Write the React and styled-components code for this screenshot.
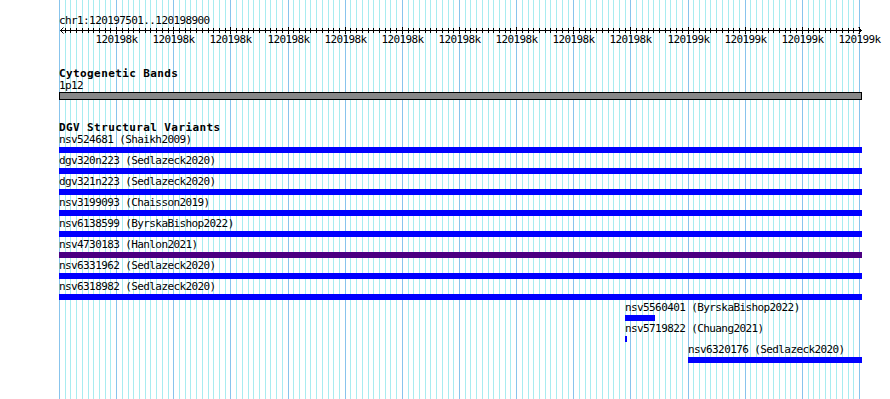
import React from 'react';
import styled, { createGlobalStyle } from 'styled-components';

const WIN_START = 120197500;
const WIN_END = 120198900;
const PX_PER_BP = 800 / 1400;
const TRACK_WIDTH = 803;

const toPx = (bp) => Math.round((bp - WIN_START) * PX_PER_BP);

const GlobalStyle = createGlobalStyle`
  html, body {
    margin: 0;
    padding: 0;
    background: #fff;
  }
  body {
    font-family: "DejaVu Sans Mono", "Liberation Mono", monospace;
    color: #000;
  }
`;

const Page = styled.div`
  width: 890px;
  height: 399px;
  overflow: hidden;
  display: flex;
`;

// data area, the guide lines sit behind everything in it
const Canvas = styled.div`
  position: relative;
  margin-left: 59px;
  width: ${TRACK_WIDTH}px;
  height: 100%;
`;

const Guides = styled.svg`
  position: absolute;
  top: 0;
  left: 0;
  z-index: 0;
`;

const Content = styled.div`
  position: relative;
  z-index: 1;
  display: flex;
  flex-direction: column;
`;

const Position = styled.div`
  margin-top: 15px;
  font-size: 11px;
  letter-spacing: -0.6px;
  line-height: 12px;
  white-space: nowrap;
`;

const Ruler = styled.svg`
  display: block;
  overflow: visible;
`;

const TickLabel = styled.text`
  font-family: "DejaVu Sans Mono", "Liberation Mono", monospace;
  font-size: 11px;
  letter-spacing: -0.6px;
  fill: #000;
`;

const TrackTitle = styled.div`
  margin-top: ${(p) => p.$gap}px;
  font-size: 11px;
  line-height: 12px;
  font-weight: bold;
  letter-spacing: 0.4px;
  white-space: nowrap;
`;

const ItemLabel = styled.div`
  font-size: 11px;
  letter-spacing: -0.6px;
  line-height: 12px;
  white-space: nowrap;
  margin-bottom: 1px;
`;

const BandLabel = styled(ItemLabel)`
  margin-bottom: 0;
`;

const Band = styled.div`
  height: 8px;
  box-sizing: border-box;
  border: 1px solid #000;
  background: #888;
`;

const Row = styled.div`
  display: flex;
  flex-direction: column;
  align-items: flex-start;
  margin-bottom: 2px;
`;

const Bar = styled.div`
  height: 6px;
  background: ${(p) => p.$color};
`;

const variants = [
  { name: 'nsv524681', study: 'Shaikh2009', start: 120190000, end: 120210000, color: '#0000ff' },
  { name: 'dgv320n223', study: 'Sedlazeck2020', start: 120190000, end: 120210000, color: '#0000ff' },
  { name: 'dgv321n223', study: 'Sedlazeck2020', start: 120190000, end: 120210000, color: '#0000ff' },
  { name: 'nsv3199093', study: 'Chaisson2019', start: 120190000, end: 120210000, color: '#0000ff' },
  { name: 'nsv6138599', study: 'ByrskaBishop2022', start: 120190000, end: 120210000, color: '#0000ff' },
  { name: 'nsv4730183', study: 'Hanlon2021', start: 120190000, end: 120210000, color: '#4b0082' },
  { name: 'nsv6331962', study: 'Sedlazeck2020', start: 120190000, end: 120210000, color: '#0000ff' },
  { name: 'nsv6318982', study: 'Sedlazeck2020', start: 120190000, end: 120210000, color: '#0000ff' },
  { name: 'nsv5560401', study: 'ByrskaBishop2022', start: 120198491, end: 120198543, color: '#0000ff' },
  { name: 'nsv5719822', study: 'Chuang2021', start: 120198491, end: 120198494, color: '#0000ff' },
  { name: 'nsv6320176', study: 'Sedlazeck2020', start: 120198601, end: 120199500, color: '#0000ff' },
];

// printf style rounding (half to even)
const kLabel = (pos) => {
  const v = pos / 1000;
  let r = Math.round(v);
  if (v - Math.floor(v) === 0.5 && r % 2) r -= 1;
  return `${r}k`;
};

const steps = [];
for (let d = 0; d <= WIN_END - WIN_START; d += 10) steps.push(d);

function GuideLines() {
  return (
    <Guides width={TRACK_WIDTH} height={399}>
      {steps.map((d) => {
        const x = Math.round(d * PX_PER_BP) + 0.5;
        return (
          <line
            key={d}
            x1={x}
            x2={x}
            y1={0}
            y2={399}
            stroke={d % 100 === 0 ? '#88c4ec' : '#a8ecf0'}
            strokeWidth={1}
          />
        );
      })}
    </Guides>
  );
}

function BaseRuler() {
  const ticks = steps.filter((d) => d > 0);
  return (
    <Ruler width={831} height={20}>
      <line x1={1} x2={803} y1={3.5} y2={3.5} stroke="#000" />
      <polyline points="4.5,0.5 1.5,3.5 4.5,6.5" fill="none" stroke="#000" />
      <polyline points="799.5,0.5 802.5,3.5 799.5,6.5" fill="none" stroke="#000" />
      {ticks.map((d) => {
        const x = Math.round(d * PX_PER_BP) + 0.5;
        const major = d % 100 === 0;
        return (
          <line key={d} x1={x} x2={x} y1={major ? 0 : 1} y2={major ? 7 : 6} stroke="#000" />
        );
      })}
      {ticks
        .filter((d) => d % 100 === 0)
        .map((d) => (
          <TickLabel key={d} x={Math.round(d * PX_PER_BP) + 0.5} y={16} textAnchor="middle">
            {kLabel(WIN_START + d)}
          </TickLabel>
        ))}
    </Ruler>
  );
}

export default function App() {
  return (
    <>
      <GlobalStyle />
      <Page>
        <Canvas>
          <GuideLines />
          <Content>
            <Position>chr1:120197501..120198900</Position>
            <BaseRuler />

            <TrackTitle $gap={21}>Cytogenetic Bands</TrackTitle>
            <BandLabel>1p12</BandLabel>
            <Band />

            <TrackTitle $gap={22}>DGV Structural Variants</TrackTitle>
            {variants.map((v) => {
              const x0 = Math.max(0, toPx(v.start));
              const x1 = Math.min(TRACK_WIDTH, toPx(v.end));
              return (
                <Row key={v.name}>
                  <ItemLabel style={{ marginLeft: x0 }}>
                    {v.name} ({v.study})
                  </ItemLabel>
                  <Bar $color={v.color} style={{ marginLeft: x0, width: Math.max(1, x1 - x0) }} />
                </Row>
              );
            })}
          </Content>
        </Canvas>
      </Page>
    </>
  );
}
